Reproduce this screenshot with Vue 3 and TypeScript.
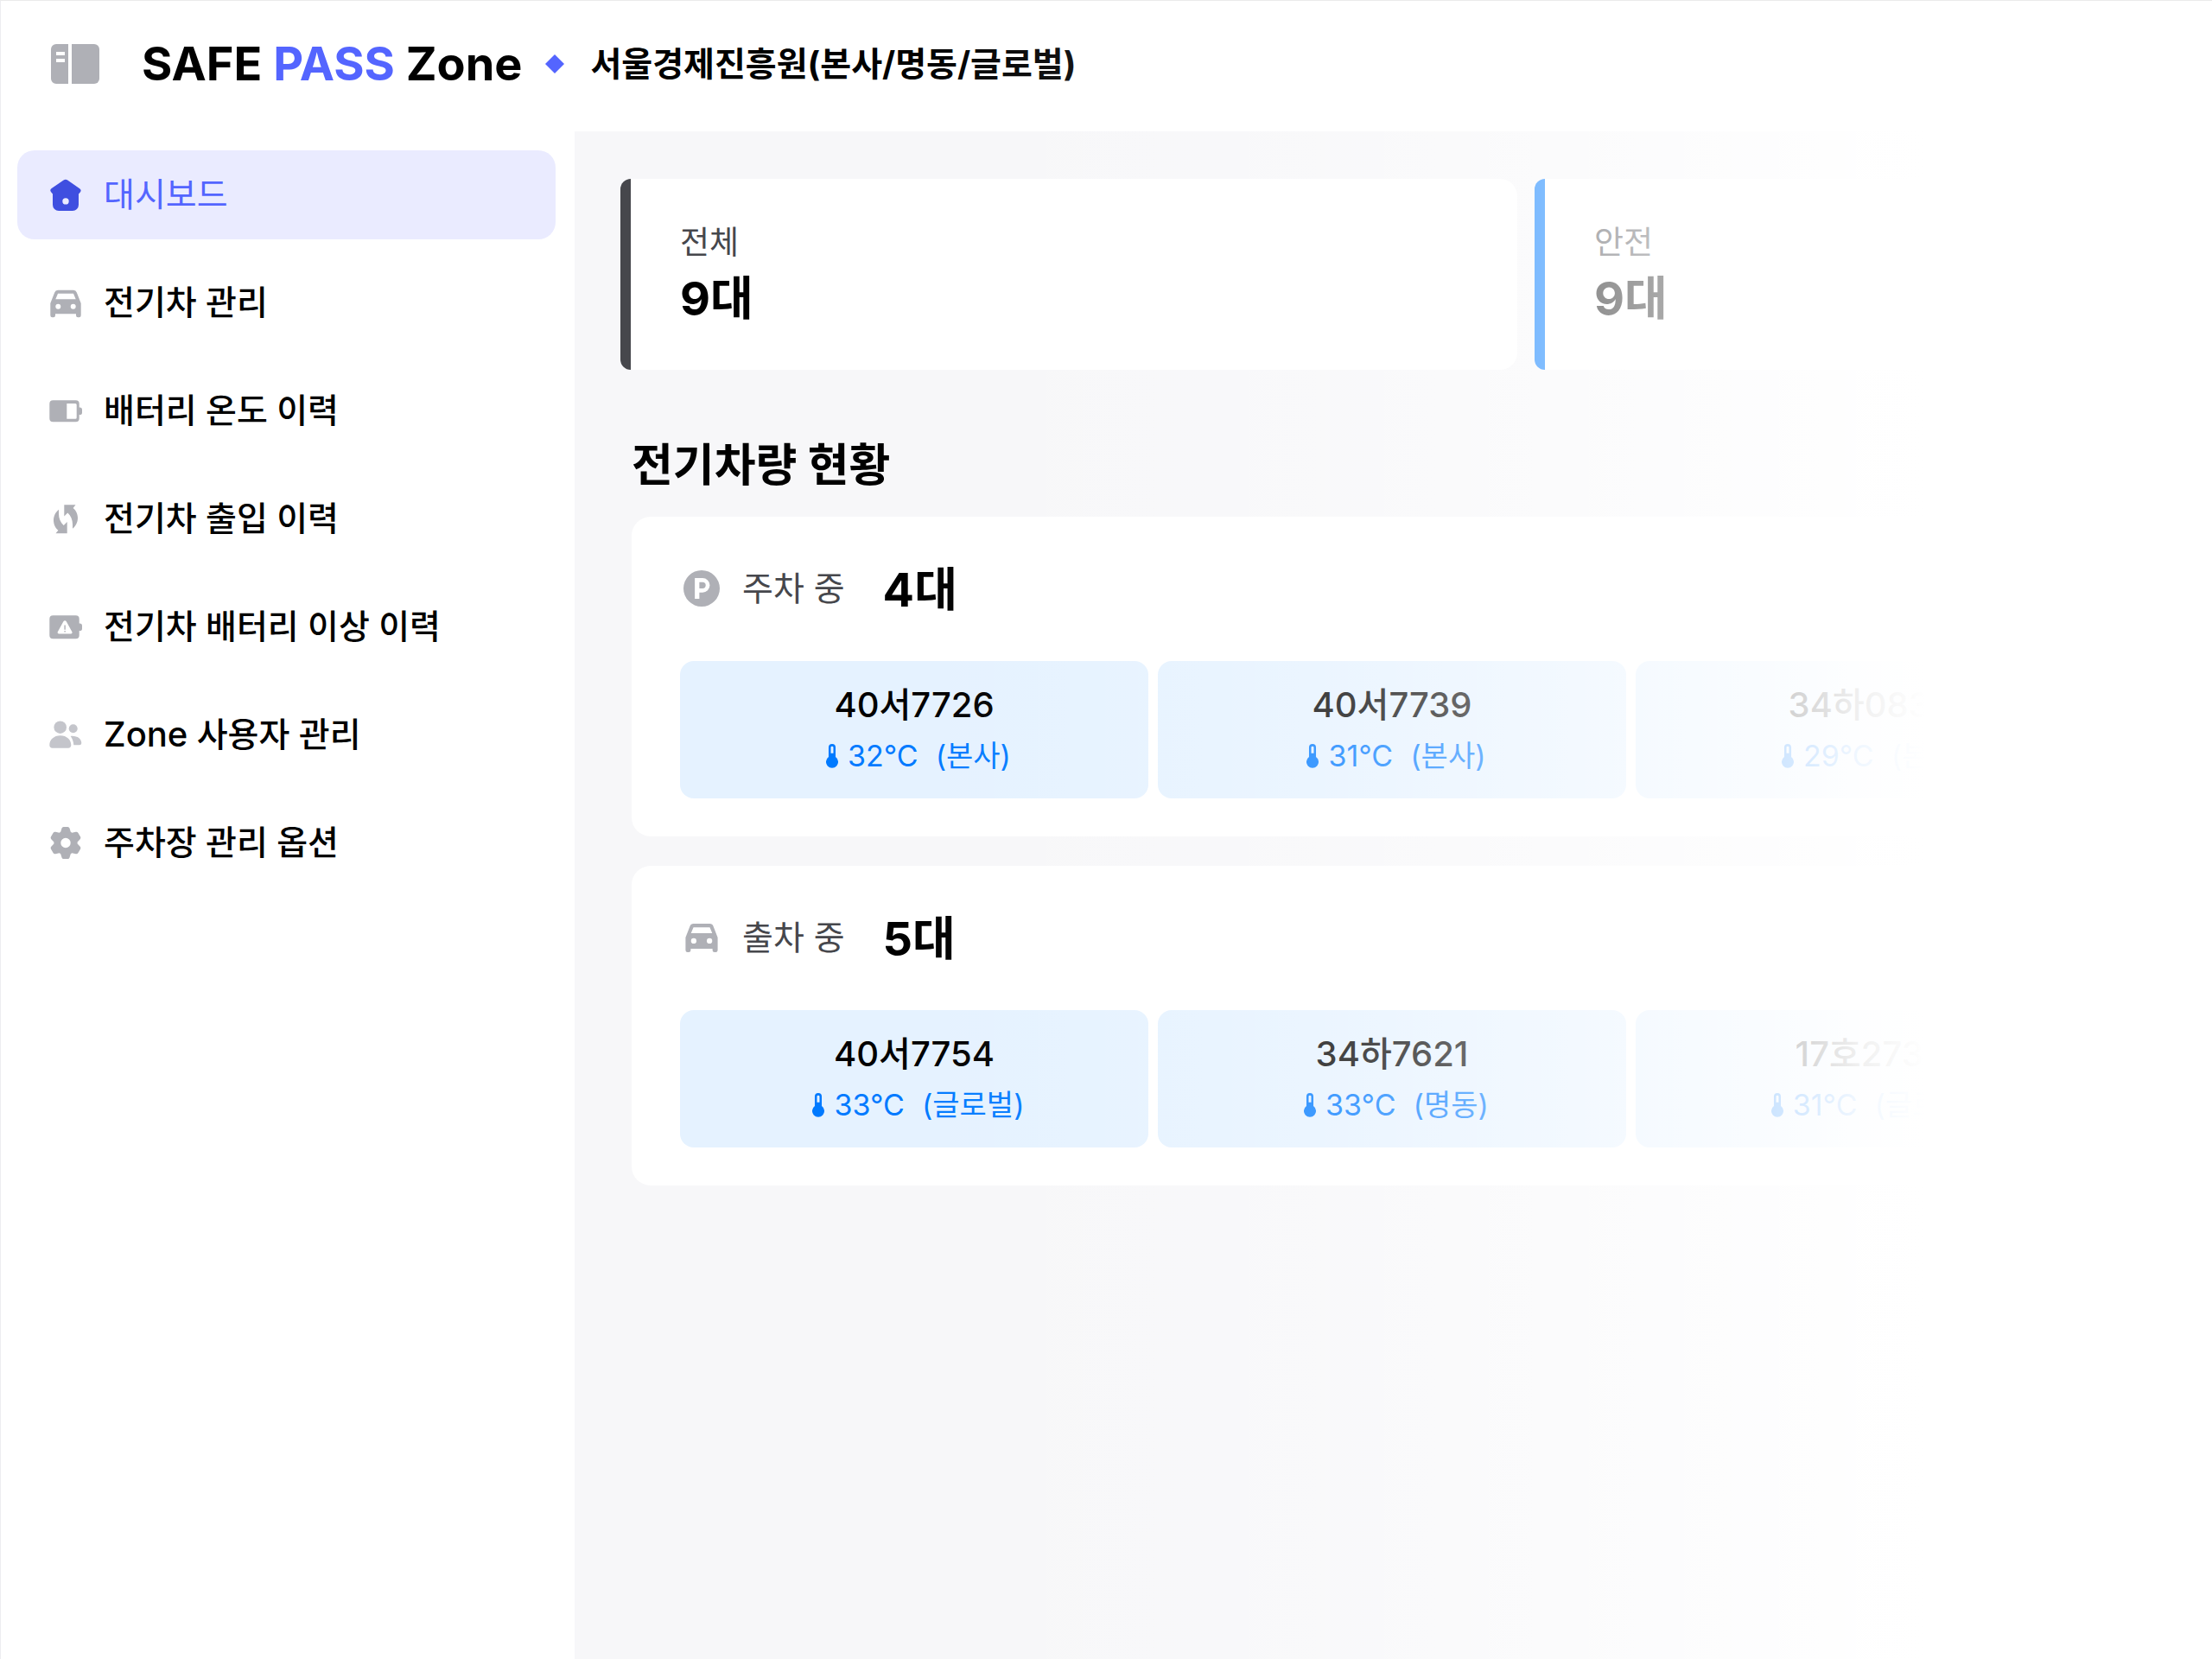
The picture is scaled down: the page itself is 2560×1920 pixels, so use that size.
<script setup lang="ts">
interface MenuItem {
  icon: string
  latin?: string
  label: string
}

interface Vehicle {
  plate: string
  temp: number
  site: string
}

interface Group {
  icon: string
  label: string
  count: number
  vehicles: Vehicle[]
}

const site = '서울경제진흥원(본사/명동/글로벌)'

const menu: MenuItem[] = [
  { icon: 'home', label: '대시보드' },
  { icon: 'car', label: '전기차 관리' },
  { icon: 'battery', label: '배터리 온도 이력' },
  { icon: 'swap', label: '전기차 출입 이력' },
  { icon: 'alert', label: '전기차 배터리 이상 이력' },
  { icon: 'users', latin: 'Zone', label: ' 사용자 관리' },
  { icon: 'gear', label: '주차장 관리 옵션' },
]

const stats = [
  { kind: 'total', label: '전체', count: 9 },
  { kind: 'safe', label: '안전', count: 9 },
]

const groups: Group[] = [
  {
    icon: 'parking',
    label: '주차 중',
    count: 4,
    vehicles: [
      { plate: '40서7726', temp: 32, site: '본사' },
      { plate: '40서7739', temp: 31, site: '본사' },
      { plate: '34하0832', temp: 29, site: '본사' },
    ],
  },
  {
    icon: 'car',
    label: '출차 중',
    count: 5,
    vehicles: [
      { plate: '40서7754', temp: 33, site: '글로벌' },
      { plate: '34하7621', temp: 33, site: '명동' },
      { plate: '17호2735', temp: 31, site: '글로벌' },
    ],
  },
]
</script>

<template>
  <div class="app">
    <svg class="sprite" aria-hidden="true">
      <symbol id="i-home" viewBox="0 0 40 40">
        <path fill-rule="evenodd" d="M17.6 2.6a4 4 0 0 1 4.600 0l14 9.600a2.900 2.900 0 0 1 .6 4.200L35 18.600V31a7 7 0 0 1-7 7H12a7 7 0 0 1-7-7V18.600l-1.900-2.300a2.900 2.900 0 0 1 .6-4.200zM20 23.200a3.700 3.700 0 1 0 0 7.400 3.700 3.700 0 0 0 0-7.400z" />
      </symbol>
      <symbol id="i-car" viewBox="0 0 40 40">
        <path fill-rule="evenodd" d="M11 4.700h18a4 4 0 0 1 3.800 2.700L37.700 20v14a2.300 2.300 0 0 1-2.300 2.300h-1.100A2.300 2.300 0 0 1 32 34v-1.700H8V34a2.300 2.300 0 0 1-2.300 2.300H4.600A2.300 2.300 0 0 1 2.300 34V20L7.200 7.400A4 4 0 0 1 11 4.700zM11 8.700L8.300 15.300h23.400L29 8.700zM11.300 20.700a3 3 0 1 0 0 6 3 3 0 0 0 0-6zm17.400 0a3 3 0 1 0 0 6 3 3 0 0 0 0-6z" />
      </symbol>
      <symbol id="i-battery" viewBox="0 0 40 40">
        <path fill-rule="evenodd" d="M5.300 7.300h26.400a4 4 0 0 1 4 4V15.500h.6a2.700 2.700 0 0 1 2.700 2.700v3.200a2.700 2.700 0 0 1-2.700 2.700h-.6v4.200a4 4 0 0 1-4 4H5.300a4 4 0 0 1-4-4v-17a4 4 0 0 1 4-4zM21.300 11v17.700h9.900a1.500 1.500 0 0 0 1.500-1.500V12.500a1.500 1.500 0 0 0-1.500-1.500z" />
      </symbol>
      <symbol id="i-swap" viewBox="0 0 40 40">
        <path d="M18.300 3.300h13.200l-2.900 3.600C32.500 9.800 34 14.500 34 18.500c0 5-2.500 9.500-6 12.300V26c0-5.500-2-10-5.700-13.500l-4 4zM21.700 36.300H8.500l2.900-3.600C7.500 29.800 6 25.100 6 21.100c0-5 2.500-9.500 6-12.300v4.800c0 5.500 2 10 5.700 13.500l4-4z" />
      </symbol>
      <symbol id="i-alert" viewBox="0 0 40 40">
        <path fill-rule="evenodd" d="M5.300 6.300h26.400a4 4 0 0 1 4 4V15.500h.6a2.700 2.700 0 0 1 2.700 2.700v3.200a2.700 2.700 0 0 1-2.700 2.700h-.6v5.200a4 4 0 0 1-4 4H5.300a4 4 0 0 1-4-4v-19a4 4 0 0 1 4-4zM17.400 13.200l-6.600 12a1.500 1.500 0 0 0 1.300 2.200h14a1.500 1.500 0 0 0 1.300-2.200l-6.600-12a2 2 0 0 0-3.400 0zM18.400 17.500h1.400v5.300h-1.400zM18.400 24h1.400v1.400h-1.400z" />
      </symbol>
      <symbol id="i-users" viewBox="0 0 40 40">
        <circle cx="13.700" cy="10.700" r="7.300" />
        <circle cx="28.700" cy="12.300" r="5" />
        <path d="M13.800 20.300c7.500 0 12.500 5 12.500 10.900 0 2.300-1.300 3.500-3.300 3.500H4.600c-2 0-3.300-1.200-3.300-3.500 0-5.900 5-10.900 12.500-10.900zM25.700 20.900c7-.9 12.600 3 12.600 7.900 0 1.700-1 2.500-2.500 2.500h-6.500c-.2-4-1.500-7.600-3.600-10.400z" />
      </symbol>
      <symbol id="i-gear" viewBox="0 0 40 40">
        <path fill-rule="evenodd" d="M17.600.900h4.800q1.600 0 2.100 1.600l1.300 4.300 1.500.9 4.500-1q1.700-.3 2.500 1.100l2.800 4.800q.8 1.400-.4 2.600l-3.100 3.400v1.800l3.100 3.400q1.200 1.200.4 2.600l-2.800 4.800q-.8 1.400-2.500 1.100l-4.500-1-1.500.9-1.300 4.300q-.5 1.600-2.100 1.600h-4.800q-1.600 0-2.100-1.600l-1.300-4.300-1.500-.9-4.500 1q-1.700.3-2.500-1.100l-2.800-4.800q-.8-1.400.4-2.600l3.100-3.400v-1.800l-3.100-3.400q-1.200-1.200-.4-2.600l2.800-4.800q.8-1.400 2.500-1.100l4.500 1 1.500-.9 1.300-4.300q.5-1.600 2.100-1.600zM20 13.800a5.700 5.700 0 1 0 0 11.400 5.700 5.700 0 0 0 0-11.400z" />
      </symbol>
      <symbol id="i-parking" viewBox="0 0 40 40">
        <path fill-rule="evenodd" d="M20 0a20 20 0 1 1 0 40 20 20 0 0 1 0-40zM12.500 8.500v23h5v-7H21a8 8 0 0 0 0-16zM17.500 13H21a3.500 3.500 0 0 1 0 7h-3.500z" />
      </symbol>
      <symbol id="i-thermo" viewBox="0 0 16 32">
        <path fill-rule="evenodd" d="M8 0a4.600 4.600 0 0 1 4.600 4.600V17.200a8 8 0 1 1-9.200 0V4.600A4.600 4.600 0 0 1 8 0zm0 3A1.700 1.700 0 0 0 6.300 4.700v7.500h3.400V4.700A1.700 1.700 0 0 0 8 3z" />
      </symbol>
    </svg>

    <header class="topbar">
      <button class="toggle" type="button" aria-label="메뉴 접기">
        <svg viewBox="0 0 56 46" aria-hidden="true">
          <path fill-rule="evenodd" d="M6 0h14v46H6a6 6 0 0 1-6-6V6a6 6 0 0 1 6-6zM6 9v4h10V9zM6 17v4h10v-4z" />
          <path d="M24 0h26a6 6 0 0 1 6 6v34a6 6 0 0 1-6 6H24z" />
        </svg>
      </button>
      <h1 class="brand">SAFE <span>PASS</span> Zone</h1>
      <svg class="diamond" viewBox="0 0 22 22" aria-hidden="true"><path d="M11 0l11 11-11 11L0 11z" /></svg>
      <p class="site">{{ site }}</p>
    </header>

    <div class="body">
      <nav class="sidebar">
        <ul>
          <li v-for="(item, i) in menu" :key="item.icon">
            <a href="#" :class="{ active: i === 0 }">
              <svg :class="['icon', item.icon]" aria-hidden="true"><use :href="'#i-' + item.icon" /></svg>
              <span class="label"><span v-if="item.latin" class="latin">{{ item.latin }}</span>{{ item.label }}</span>
            </a>
          </li>
        </ul>
      </nav>

      <main class="content">
        <section class="stats">
          <article v-for="s in stats" :key="s.kind" :class="['stat', s.kind]">
            <p class="stat-label">{{ s.label }}</p>
            <p class="count">{{ s.count }}대</p>
          </article>
        </section>

        <h2 class="heading">전기차량 현황</h2>

        <section v-for="g in groups" :key="g.label" class="group">
          <div class="group-head">
            <svg class="group-icon" aria-hidden="true"><use :href="'#i-' + g.icon" /></svg>
            <h3>{{ g.label }}</h3>
            <p class="count">{{ g.count }}대</p>
          </div>
          <ul class="tiles">
            <li v-for="v in g.vehicles" :key="v.plate" class="tile">
              <p class="plate">{{ v.plate }}</p>
              <p class="temp">
                <svg aria-hidden="true"><use href="#i-thermo" /></svg>
                <span>{{ v.temp }}°C</span>
                <span class="place">({{ v.site }})</span>
              </p>
            </li>
          </ul>
        </section>
      </main>
    </div>
  </div>
</template>

<style>
body {
  margin: 0;
  background: #fff;
}
</style>

<style scoped>
.app {
  position: relative;
  display: flex;
  flex-direction: column;
  min-height: 100vh;
  box-sizing: border-box;
  overflow: hidden;
  border-top: 1px solid #ebebeb;
  border-left: 1px solid #ededf0;
  background: #fff;
  color: #000;
  font-family: Inter, "Noto Sans CJK KR", sans-serif;
}

/* fades the right-hand side of the page out to white */
.app::after {
  content: "";
  position: absolute;
  inset: -1px 0 0 0;
  pointer-events: none;
  background: linear-gradient(
    to right,
    rgba(255, 255, 255, 0) 41%,
    rgba(255, 255, 255, 0.06) 47%,
    rgba(255, 255, 255, 0.16) 55%,
    rgba(255, 255, 255, 0.27) 61%,
    rgba(255, 255, 255, 0.51) 70%,
    rgba(255, 255, 255, 0.86) 82%,
    rgba(255, 255, 255, 0.94) 84%,
    #fff 87%
  );
}

p, h1, h2, h3, ul {
  margin: 0;
  padding: 0;
}

ul {
  list-style: none;
}

svg {
  flex: none;
  fill: #afb0b6;
}

.sprite {
  position: absolute;
  width: 0;
  height: 0;
}

.topbar {
  display: flex;
  align-items: center;
  height: 151px;
  box-sizing: border-box;
  padding: 0 58px 6px;
}

.toggle {
  display: flex;
  padding: 0;
  border: 0;
  background: none;
}

.toggle svg {
  width: 56px;
  height: 46px;
}

.brand {
  margin-left: 49px;
  font-size: 54px;
  line-height: 64px;
  font-weight: 700;
  white-space: nowrap;
}

.brand span {
  color: #5465ff;
}

.diamond {
  width: 22px;
  height: 22px;
  margin: 0 30px 0 27px;
  fill: #5465ff;
}

.site {
  font-size: 39px;
  line-height: 56px;
  font-weight: 700;
  white-space: nowrap;
}

.body {
  display: flex;
  flex: 1;
}

.sidebar {
  flex: none;
  width: 664px;
  box-sizing: border-box;
  padding: 22px 22px 22px 19px;
}

.sidebar ul {
  display: flex;
  flex-direction: column;
  gap: 22px;
}

.sidebar a {
  display: flex;
  align-items: center;
  gap: 24px;
  height: 103px;
  box-sizing: border-box;
  padding-left: 36px;
  border-radius: 20px;
  color: #000;
  text-decoration: none;
}

.label {
  padding-bottom: 2px;
  font-size: 39px;
  line-height: 56px;
  font-weight: 500;
  white-space: pre;
}

.latin {
  font-size: 40px;
}

.icon {
  width: 40px;
  height: 40px;
}

.icon.users {
  fill: #c4c5cb;
}

.icon.home {
  fill: #3f4fe0;
}

.sidebar a.active {
  background: #eaebff;
  color: #5465ff;
}

.active .label {
  font-weight: 400;
}

.content {
  flex: 1;
  min-width: 0;
  box-sizing: border-box;
  padding: 55px 0 55px 53px;
  background: #f7f7f9;
}

.stats {
  display: flex;
  gap: 20px;
}

.stat {
  flex: 1 0 1038px;
  height: 221px;
  box-sizing: border-box;
  padding: 48px 0 0 57px;
  border-left: 12px solid #46474c;
  border-radius: 12px 20px 20px 12px;
  background: #fff;
}

.stat.safe {
  border-left-color: #007aff;
}

.stat-label {
  color: #46474c;
  font-size: 37px;
  line-height: 52px;
}

.count {
  font-size: 54px;
  line-height: 78px;
  font-weight: 700;
}

.heading {
  margin: 72px 0 20px 13px;
  font-size: 52px;
  line-height: 78px;
  font-weight: 700;
}

.group {
  height: 370px;
  box-sizing: border-box;
  margin: 0 0 34px 13px;
  padding: 46px 0 0 56px;
  border-radius: 22px 0 0 22px;
  background: #fff;
}

.group-head {
  display: flex;
  align-items: center;
  height: 78px;
  margin-bottom: 43px;
}

.group-icon {
  width: 42px;
  height: 42px;
  margin: 0 26px 4px 4px;
}

.group-head h3 {
  margin: 0 44px 4px 0;
  color: #46474c;
  font-size: 39px;
  line-height: 56px;
  font-weight: 400;
}

.tiles {
  display: flex;
  gap: 11px;
}

.tile {
  flex: 0 0 542px;
  height: 159px;
  box-sizing: border-box;
  padding-top: 22px;
  border-radius: 16px;
  background: #e5f2ff;
  text-align: center;
}

.plate {
  font-size: 40px;
  line-height: 58px;
  font-weight: 500;
}

.temp {
  display: flex;
  align-items: center;
  justify-content: center;
  padding-left: 10px;
  color: #007aff;
  font-size: 34px;
  line-height: 60px;
}

.temp svg {
  width: 14px;
  height: 28px;
  margin-right: 11px;
  fill: #007aff;
}

.place {
  margin-left: 20px;
}
</style>
